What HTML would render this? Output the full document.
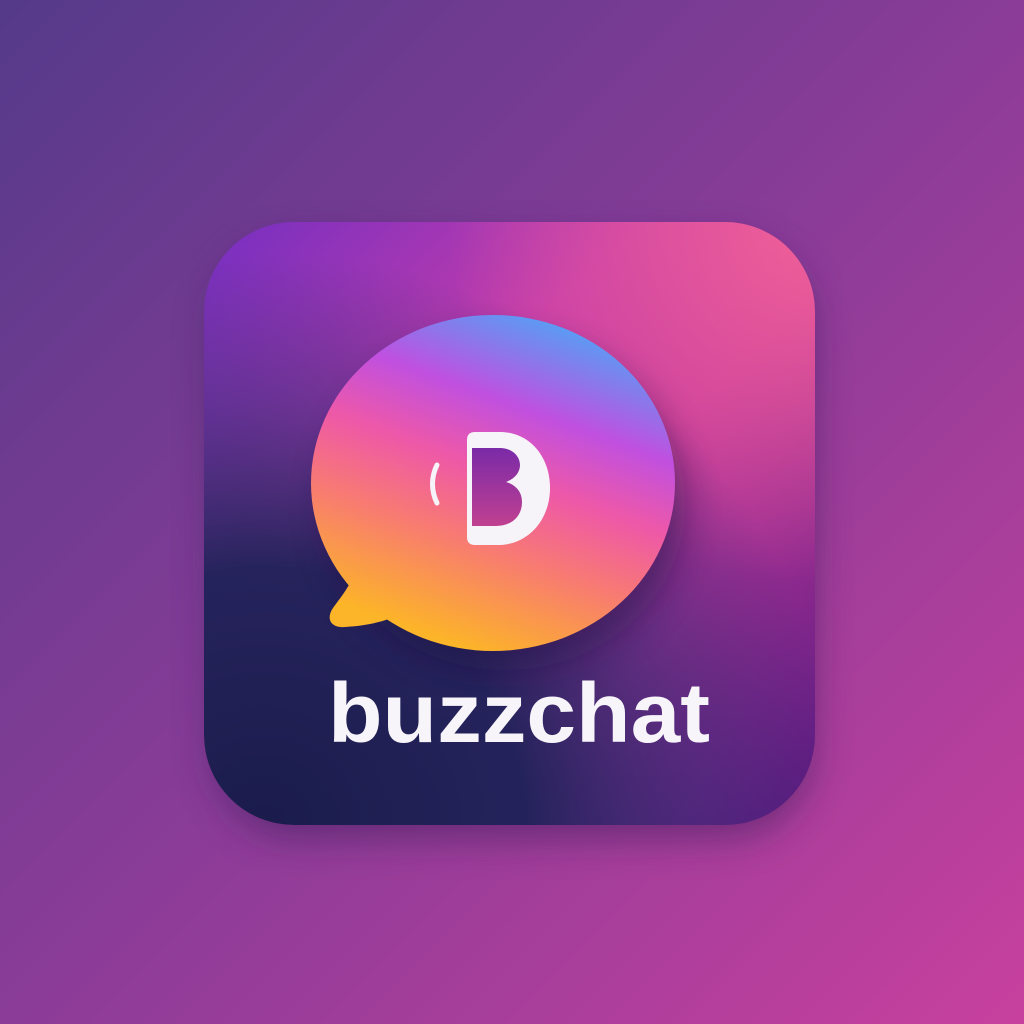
<!DOCTYPE html>
<html><head><meta charset="utf-8"><style>
html,body{margin:0;padding:0;width:1024px;height:1024px;overflow:hidden}
</style></head><body>
<svg width="1024" height="1024" viewBox="0 0 1024 1024" xmlns="http://www.w3.org/2000/svg">
<defs>
<linearGradient id="bg" x1="0" y1="0" x2="1" y2="1">
<stop offset="0" stop-color="#553a8a"/><stop offset="0.5" stop-color="#8a3c98"/><stop offset="1" stop-color="#c8409e"/>
</linearGradient>
<linearGradient id="sq1" gradientUnits="userSpaceOnUse" x1="220" y1="240" x2="800" y2="820">
<stop offset="0" stop-color="#7a30c0"/><stop offset="0.35" stop-color="#c43caa"/><stop offset="0.55" stop-color="#c43a9e"/><stop offset="1" stop-color="#5a1a80"/>
</linearGradient>
<radialGradient id="sq2" cx="0.1" cy="1" r="0.95">
<stop offset="0" stop-color="#1a1c4c"/><stop offset="0.45" stop-color="#1e2258" stop-opacity="0.95"/><stop offset="0.75" stop-color="#2a2e70" stop-opacity="0.45"/><stop offset="1" stop-color="#2a2e70" stop-opacity="0"/>
</radialGradient>
<radialGradient id="sq4" cx="1" cy="0" r="0.6">
<stop offset="0" stop-color="#f06098"/><stop offset="1" stop-color="#f06098" stop-opacity="0"/>
</radialGradient>
<linearGradient id="bub" gradientUnits="userSpaceOnUse" x1="590" y1="320" x2="470" y2="650">
<stop offset="0" stop-color="#4aa8f8"/><stop offset="0.3" stop-color="#c050e0"/><stop offset="0.5" stop-color="#ee58a8"/><stop offset="0.72" stop-color="#f87c70"/><stop offset="1" stop-color="#fcb428"/>
</linearGradient>
<linearGradient id="inner" x1="0" y1="0" x2="0" y2="1">
<stop offset="0" stop-color="#7a2aa8"/><stop offset="1" stop-color="#c04090"/>
</linearGradient>
<filter id="sh" x="-20%" y="-20%" width="140%" height="140%"><feGaussianBlur stdDeviation="18"/></filter>
<clipPath id="c"><rect x="204" y="222" width="611" height="603" rx="90"/></clipPath>
</defs>
<rect width="1024" height="1024" fill="url(#bg)"/>
<rect x="210" y="240" width="605" height="600" rx="90" fill="#3a1a5a" opacity="0.5" filter="url(#sh)"/>
<g clip-path="url(#c)">
<rect x="204" y="222" width="611" height="603" fill="url(#sq1)"/>
<rect x="204" y="222" width="611" height="603" fill="url(#sq4)"/>
<rect x="204" y="222" width="611" height="603" fill="url(#sq2)"/>
<ellipse cx="505" cy="505" rx="180" ry="165" fill="#1a1040" opacity="0.45" filter="url(#sh)"/>
</g>
<g fill="url(#bub)">
<ellipse cx="493" cy="483" rx="182" ry="168"/>
<path d="M360,560 C352,585 340,598 333,608 C326,618 330,628 345,627 C365,626 385,622 400,614 L420,600 L380,540 Z"/>
</g>
<path d="M467,440 q0,-8 8,-8 h25 c30,0 50,25 50,56 c0,32 -22,57 -52,57 h-23 q-8,0 -8,-8 z" fill="#f6f4f8"/>
<path d="M472,448 h28 c12,0 20,8 20,17 c0,8 -6,14 -14,17 c10,3 16,10 16,20 c0,14 -10,24 -26,24 h-24 z" fill="url(#inner)"/>
<path d="M437,465 c-6,12 -6,26 0,38" stroke="#f6f4f8" stroke-width="5" fill="none" stroke-linecap="round"/>
<text x="328" y="742" textLength="382" lengthAdjust="spacingAndGlyphs" font-family="Liberation Sans, sans-serif" font-weight="bold" font-size="84" fill="#f7f5f9">buzzchat</text>
</svg>
</body></html>
